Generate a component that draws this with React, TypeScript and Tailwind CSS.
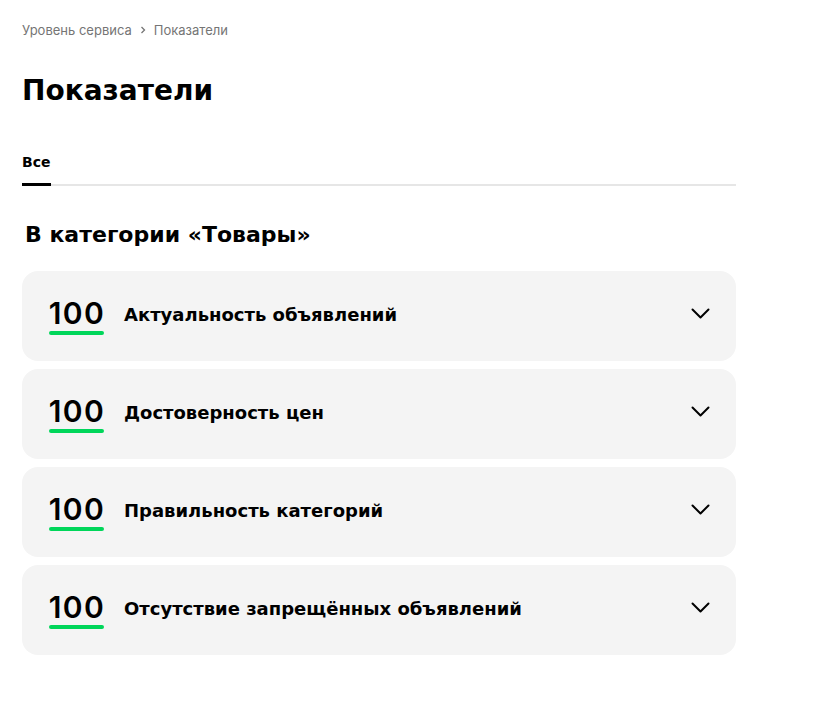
import React from 'react';

const metrics = [
  'Актуальность объявлений',
  'Достоверность цен',
  'Правильность категорий',
  'Отсутствие запрещённых объявлений',
];

function Chevron() {
  return (
    <svg width="19" height="12" viewBox="0 0 19 12" fill="none">
      <path d="M1.5 1.5L9.5 9.5L17.5 1.5" stroke="#000" strokeWidth="2" strokeLinecap="round" strokeLinejoin="round" />
    </svg>
  );
}

export default function App() {
  return (
    <div className="min-h-screen bg-white font-['Inter',sans-serif] text-black">
      <div className="w-[714px] ml-[22px] pt-[21px]">
        <div className="flex items-center gap-[7px] text-[13px] leading-[18px] text-[#757575]">
          <span>Уровень сервиса</span>
          <svg width="8" height="8" viewBox="0 0 8 8" fill="none">
            <path d="M2.5 1L5.5 4L2.5 7" stroke="#757575" strokeWidth="1.3" />
          </svg>
          <span>Показатели</span>
        </div>

        <h1 className="mt-[34px] font-['DejaVu_Sans',sans-serif] text-[28px] leading-[36px] font-bold">Показатели</h1>

        <div className="mt-[44px] border-b-2 border-[#e6e6e6] flex">
          <div className="pb-[12px] border-b-[3px] border-black -mb-[2px] w-[29px] font-['DejaVu_Sans',sans-serif] text-[14px] leading-[18px] font-bold">
            Все
          </div>
        </div>

        <h2 className="mt-[35px] ml-[3px] font-['DejaVu_Sans',sans-serif] text-[22px] leading-[28px] font-bold">В категории «Товары»</h2>

        <div className="mt-[22px] flex flex-col gap-[8px]">
          {metrics.map((m) => (
            <div key={m} className="h-[90px] rounded-[16px] bg-[#f4f4f4] flex items-center pl-[27px] pr-[26px]">
              <div className="flex flex-col items-center w-[55px]">
                <span className="text-[30px] leading-[30px] font-semibold tracking-[1.5px] pl-[1px]">100</span>
                <span className="mt-[3px] h-[4px] w-[55px] rounded-full bg-[#00d65a]" />
              </div>
              <span className="ml-[20px] font-['DejaVu_Sans',sans-serif] text-[18px] leading-[24px] font-bold flex-1 -mt-[2px]">{m}</span>
              <span className="-mt-[4px]">
                <Chevron />
              </span>
            </div>
          ))}
        </div>
      </div>
    </div>
  );
}
